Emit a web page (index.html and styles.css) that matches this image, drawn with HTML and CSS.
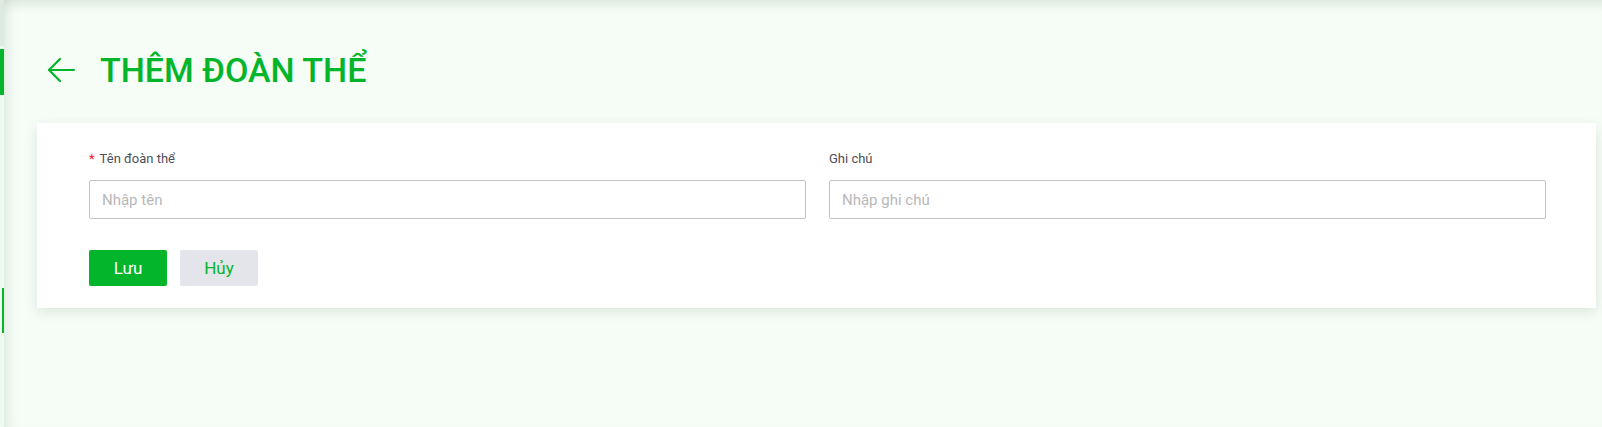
FILE: index.html
```html
<!DOCTYPE html>
<html lang="vi">
<head>
  <meta charset="UTF-8" />
  <meta name="viewport" content="width=device-width, initial-scale=1.0"/>
  <title>Thêm đoàn thể</title>
  <link rel="stylesheet" href="styles.css">
</head>
<body>
  <aside class="sidebar">
    <div class="side-top"></div>
    <div class="side-active"></div>
    <div class="side-mark"></div>
  </aside>

  <main class="main">
    <div class="page-head">
      <button class="back-btn" aria-label="Quay lại">
        <svg width="30" height="26" viewBox="0 0 30 26" fill="none" stroke="currentColor" stroke-width="2.2" stroke-linecap="round" stroke-linejoin="round">
          <path d="M28 13H3"/>
          <path d="M14 2L3 13l11 11"/>
        </svg>
      </button>
      <h1 class="page-title">THÊM ĐOÀN THỂ</h1>
    </div>

    <div class="card">
      <div class="form-row">
        <div class="field">
          <label class="field-label"><span class="req">*</span>Tên đoàn thể</label>
          <input type="text" placeholder="Nhập tên">
        </div>
        <div class="field">
          <label class="field-label">Ghi chú</label>
          <input type="text" placeholder="Nhập ghi chú">
        </div>
      </div>
      <div class="actions">
        <button class="btn btn-save">Lưu</button>
        <button class="btn btn-cancel">Hủy</button>
      </div>
    </div>
  </main>
</body>
</html>
```

FILE: styles.css
```css
html, body {
  height: 100%;
}
body {
  margin: 0;
  font-family: Roboto, 'Liberation Sans', sans-serif;
  background: #f5fdf6;
  color: #333;
  display: flex;
  overflow: hidden;
}

/* Sidebar strip */
.sidebar {
  width: 4px;
  flex-shrink: 0;
  background: #effaf2;
  position: relative;
}
.side-top {
  height: 46px;
  background: #dfe9e4;
}
.side-active {
  height: 46px;
  margin-top: 3px;
  background: #03b52a;
}
.side-mark {
  width: 2px;
  height: 45px;
  margin-left: 2px;
  margin-top: 193px;
  background: #03b52a;
}

/* Main area */
.main {
  flex: 1;
  padding: 0 6px 0 33px;
  box-shadow: inset 12px 0 12px -8px rgba(0, 40, 10, 0.09),
              inset 0 12px 12px -8px rgba(0, 40, 10, 0.10);
}

.page-head {
  display: flex;
  align-items: center;
  height: 48px;
  margin-top: 46px;
  margin-bottom: 29px;
}
.back-btn {
  background: none;
  border: none;
  padding: 0;
  margin-left: 9px;
  color: #03b52a;
  display: flex;
  cursor: pointer;
}
.page-title {
  margin: 0 0 0 24px;
  font-size: 34px;
  font-weight: 500;
  color: #03b52a;
  letter-spacing: 0;
}

.card {
  background: #fff;
  padding: 26px 50px 22px 52px;
  box-shadow: 0 4px 12px rgba(0, 40, 10, 0.10);
}
.form-row {
  display: grid;
  grid-template-columns: 1fr 1fr;
  gap: 23px;
}
.field-label {
  display: block;
  font-size: 13px;
  color: #4f4f58;
  margin-bottom: 11px;
  height: 20px;
  line-height: 20px;
}
.req {
  color: #f5222d;
  margin-right: 5px;
}
.field input {
  display: block;
  width: 100%;
  box-sizing: border-box;
  height: 39px;
  padding: 0 12px;
  border: 1px solid #c4c4c4;
  border-radius: 2px;
  font-family: Roboto, 'Liberation Sans', sans-serif;
  font-size: 15px;
  color: #333;
  outline: none;
}
.field input::placeholder {
  color: #b8b8b8;
}

.actions {
  display: flex;
  gap: 13px;
  margin-top: 31px;
}
.btn {
  width: 78px;
  height: 36px;
  border: none;
  border-radius: 2px;
  font-family: Roboto, 'Liberation Sans', sans-serif;
  font-size: 17px;
  cursor: pointer;
}
.btn-save {
  background: #03b52a;
  color: #fff;
}
.btn-cancel {
  background: #e4e5ea;
  color: #03b52a;
}
```
